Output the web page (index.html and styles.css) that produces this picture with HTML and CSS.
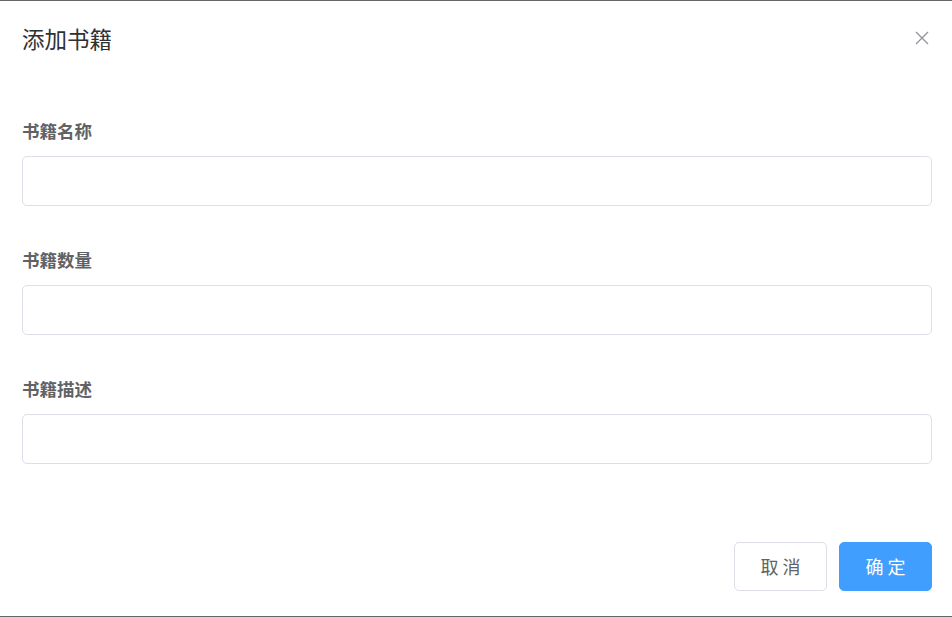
FILE: index.html
```html
<!DOCTYPE html>
<html lang="zh">
<head>
<meta charset="utf-8">
<title>添加书籍</title>
<link rel="stylesheet" href="styles.css">
</head>
<body>
<div class="dialog">
  <div class="dialog-header">
    <span class="dialog-title">添加书籍</span>
    <button class="dialog-close" aria-label="关闭">
      <svg width="14" height="14" viewBox="0 0 14 14"><path d="M1 1L13 13M13 1L1 13" stroke="#909399" stroke-width="1.3" fill="none"/></svg>
    </button>
  </div>
  <form class="form">
    <div class="form-item">
      <label class="form-label">书籍名称</label>
      <input class="form-input" type="text">
    </div>
    <div class="form-item">
      <label class="form-label">书籍数量</label>
      <input class="form-input" type="text">
    </div>
    <div class="form-item">
      <label class="form-label">书籍描述</label>
      <input class="form-input" type="text">
    </div>
  </form>
  <div class="dialog-footer">
    <button class="btn btn-default">取 消</button>
    <button class="btn btn-primary">确 定</button>
  </div>
</div>
</body>
</html>
```
FILE: styles.css
```css
html, body {
  margin: 0;
  padding: 0;
  background: #fff;
}
body {
  font-family: "Noto Sans CJK SC", "Noto Sans", "Liberation Sans", sans-serif;
}
.dialog {
  height: 617px;
  box-sizing: border-box;
  border-top: 1px solid #666;
  border-bottom: 1px solid #666;
  display: flex;
  flex-direction: column;
}
.dialog-header {
  display: flex;
  justify-content: space-between;
  align-items: flex-start;
  padding: 22px 23px 0 22px;
}
.dialog-title {
  font-size: 22.5px;
  line-height: 30px;
  color: #303133;
}
.dialog-close {
  margin-top: 8px;
  width: 14px;
  height: 14px;
  padding: 0;
  border: 0;
  background: none;
  display: block;
}
.dialog-close svg {
  display: block;
}
.form {
  margin: 66px 20px 0 22px;
  display: flex;
  flex-direction: column;
  gap: 42px;
}
.form-item {
  display: flex;
  flex-direction: column;
}
.form-label {
  font-size: 17.5px;
  line-height: 24px;
  font-weight: bold;
  color: #606266;
  margin-bottom: 13px;
}
.form-input {
  height: 50px;
  box-sizing: border-box;
  border: 1px solid #dcdfe6;
  border-radius: 5px;
  padding: 0 15px;
  font-size: 17px;
  outline: none;
}
.dialog-footer {
  display: flex;
  justify-content: flex-end;
  gap: 12px;
  padding: 78px 20px 0 22px;
}
.btn {
  width: 93px;
  height: 49px;
  box-sizing: border-box;
  border-radius: 5px;
  font-family: inherit;
  font-size: 18px;
  line-height: 1;
  padding: 0 0 2px;
  cursor: pointer;
}
.btn-default {
  background: #fff;
  border: 1px solid #dcdfe6;
  color: #606266;
}
.btn-primary {
  background: #409eff;
  border: 1px solid #409eff;
  color: #fff;
}
```
